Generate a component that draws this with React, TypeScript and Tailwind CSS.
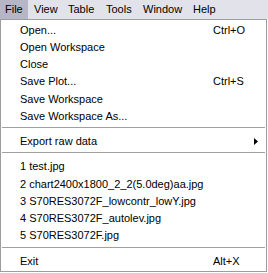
import { Fragment } from 'react'

type Item = { label: string; shortcut?: string; submenu?: boolean } | 'sep'

const items: Item[] = [
  { label: 'Open...', shortcut: 'Ctrl+O' },
  { label: 'Open Workspace' },
  { label: 'Close' },
  { label: 'Save Plot...', shortcut: 'Ctrl+S' },
  { label: 'Save Workspace' },
  { label: 'Save Workspace As...' },
  'sep',
  { label: 'Export raw data', submenu: true },
  'sep',
  { label: '1 test.jpg' },
  { label: '2 chart2400x1800_2_2(5.0deg)aa.jpg' },
  { label: '3 S70RES3072F_lowcontr_lowY.jpg' },
  { label: '4 S70RES3072F_autolev.jpg' },
  { label: '5 S70RES3072F.jpg' },
  'sep',
  { label: 'Exit', shortcut: 'Alt+X' },
]

export default function App() {
  return (
    <div className="w-[268px] h-[273px] bg-white text-black text-[11px] leading-none" style={{ fontFamily: '"Liberation Sans", Arial, sans-serif' }}>
      {/* Menu bar */}
      <div className="h-[19px] bg-[#e2e2ea] flex items-stretch">
        <div className="w-[28px] pl-[5px] flex items-center bg-[#b6b6c6]">File</div>
        <div className="w-[34px] pl-[6px] flex items-center">View</div>
        <div className="w-[38px] pl-[6px] flex items-center">Table</div>
        <div className="w-[37px] pl-[6px] flex items-center">Tools</div>
        <div className="w-[50px] pl-[6px] flex items-center">Window</div>
        <div className="w-[40px] pl-[6px] flex items-center">Help</div>
      </div>

      {/* Dropdown */}
      <div className="w-[267px] h-[253px] border border-[#9d9d9d] pt-[1.5px] flex flex-col">
        {items.map((it, i) =>
          it === 'sep' ? (
            <div key={i} className="h-[8px] pt-[2px] px-[1px] shrink-0">
              <div className="h-px bg-[#a0a0a0]" />
            </div>
          ) : (
            <Fragment key={i}>
              <div className="h-[17.25px] shrink-0 flex items-center pl-[19px] pr-[9px]">
                <span className="flex-1 whitespace-nowrap">{it.label}</span>
                {it.shortcut && <span className="w-[44px] whitespace-nowrap">{it.shortcut}</span>}
                {it.submenu && (
                  <svg width="4" height="7" viewBox="0 0 4 7" className="mr-[-1px]">
                    <path d="M0 0 L4 3.5 L0 7 Z" fill="#000" />
                  </svg>
                )}
              </div>
            </Fragment>
          )
        )}
      </div>
    </div>
  )
}
